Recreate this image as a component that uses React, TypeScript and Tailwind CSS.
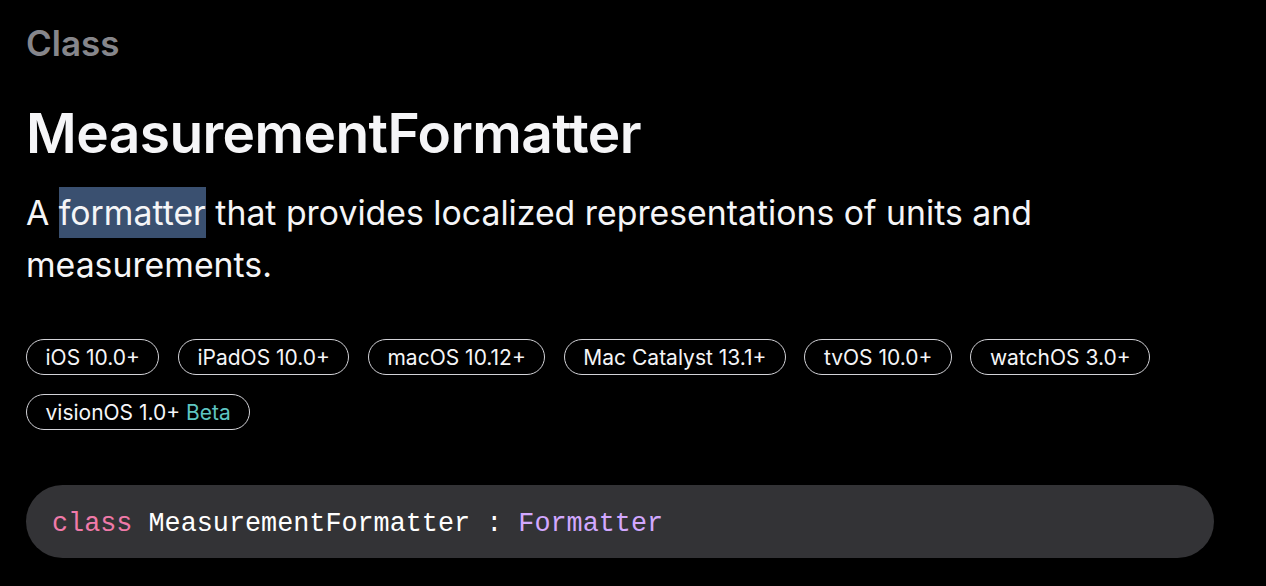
import React from "react";

const platforms = [
  "iOS 10.0+",
  "iPadOS 10.0+",
  "macOS 10.12+",
  "Mac Catalyst 13.1+",
  "tvOS 10.0+",
  "watchOS 3.0+",
];

export default function App() {
  return (
    <div
      className="min-h-[586px] w-full bg-black px-[26px] pt-[22px] text-[#f5f5f7]"
      style={{ fontFamily: "Inter, 'Noto Sans', sans-serif" }}
    >
      <div className="text-[35px] font-semibold leading-[42px] text-[#86868b]">Class</div>
      <h1 className="mt-[38px] text-[55px] font-semibold leading-[62px] tracking-[-0.01em] text-[#f5f5f7]">
        MeasurementFormatter
      </h1>
      <p className="mt-[23px] max-w-[1080px] text-[33.8px] leading-[52px] text-[#f5f5f7]">
        A <span className="bg-[#3a5070] py-[5px]">formatter</span> that provides localized representations of units and
        measurements.
      </p>
      <div className="mt-[48px] flex flex-wrap gap-x-[18.5px] gap-y-[19px]">
        {platforms.map((p) => (
          <span
            key={p}
            className="flex h-[36px] items-center rounded-full border border-[#d2d2d7] px-[18.5px] text-[21px] leading-none text-[#f5f5f7]"
          >
            {p}
          </span>
        ))}
        <span className="flex h-[36px] items-center rounded-full border border-[#d2d2d7] px-[18.5px] text-[21px] leading-none text-[#f5f5f7]">
          visionOS 1.0+&nbsp;<span className="text-[#5ec5c1]">Beta</span>
        </span>
      </div>
      <div className="mt-[55px] flex h-[73px] w-[1188px] items-center rounded-full bg-[#333336] px-[26px] pt-[5px]">
        <code
          className="text-[26.8px] leading-none text-[#ffffff]"
          style={{ fontFamily: "'Liberation Mono', 'DejaVu Sans Mono', monospace" }}
        >
          <span className="text-[#f07aa9]">class</span> MeasurementFormatter :{" "}
          <span className="text-[#d2a8ff]">Formatter</span>
        </code>
      </div>
    </div>
  );
}
